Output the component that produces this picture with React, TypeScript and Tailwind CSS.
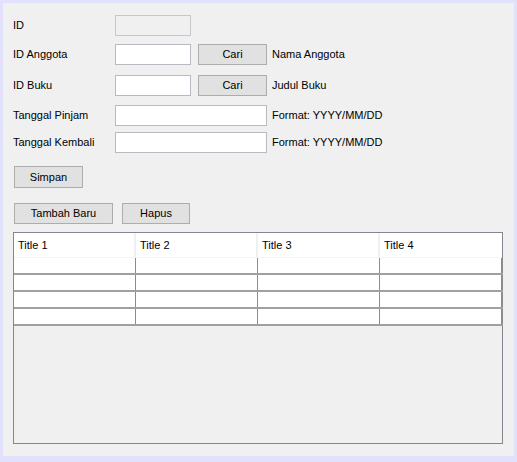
import React from 'react';

const font = { fontFamily: '"Liberation Sans", Arial, sans-serif' };

const Field: React.FC<{ w: string; disabled?: boolean }> = ({ w, disabled }) => (
  <div
    className={`${w} h-[21px] border ${disabled ? 'bg-[#f0f0f0] border-[#c6c6cc]' : 'bg-white border-[#b9b9c1]'}`}
  />
);

const Btn: React.FC<{ w: string; label: string; className?: string }> = ({ w, label, className }) => (
  <div
    className={`${w} h-[21px] bg-[#e1e1e1] border border-[#adadad] flex items-center justify-center text-[11px] text-black ${className || ''}`}
  >
    {label}
  </div>
);

const Label: React.FC<{ text: string }> = ({ text }) => (
  <div className="w-[102px] text-[11px] text-black leading-none">{text}</div>
);

const App: React.FC = () => {
  const titles = ['Title 1', 'Title 2', 'Title 3', 'Title 4'];
  const rows = [0, 1, 2, 3];

  return (
    <div className="w-[517px] h-[462px] bg-[#e1e1fb] pt-[3px] pl-[3px] pr-[3px] pb-[6px]" style={font}>
      <div className="w-full h-full bg-[#f0f0f0] pl-[10px] flex flex-col">
        {/* ID */}
        <div className="flex items-center mt-[12px]">
          <Label text="ID" />
          <Field w="w-[76px]" disabled />
        </div>

        {/* ID Anggota */}
        <div className="flex items-center mt-[8px]">
          <Label text="ID Anggota" />
          <Field w="w-[76px]" />
          <Btn w="w-[69px]" label="Cari" className="ml-[7px]" />
          <div className="ml-[5px] text-[11px]">Nama Anggota</div>
        </div>

        {/* ID Buku */}
        <div className="flex items-center mt-[10px]">
          <Label text="ID Buku" />
          <Field w="w-[76px]" />
          <Btn w="w-[69px]" label="Cari" className="ml-[7px]" />
          <div className="ml-[5px] text-[11px]">Judul Buku</div>
        </div>

        {/* Tanggal Pinjam */}
        <div className="flex items-center mt-[9px]">
          <Label text="Tanggal Pinjam" />
          <Field w="w-[152px]" />
          <div className="ml-[5px] text-[11px]">Format: YYYY/MM/DD</div>
        </div>

        {/* Tanggal Kembali */}
        <div className="flex items-center mt-[6px]">
          <Label text="Tanggal Kembali" />
          <Field w="w-[152px]" />
          <div className="ml-[5px] text-[11px]">Format: YYYY/MM/DD</div>
        </div>

        <div className="flex mt-[13px] ml-[1px]">
          <Btn w="w-[69px]" label="Simpan" className="h-[22px]" />
        </div>

        <div className="flex mt-[15px] ml-[1px] gap-[9px]">
          <Btn w="w-[99px]" label="Tambah Baru" />
          <Btn w="w-[68px]" label="Hapus" />
        </div>

        {/* Table */}
        <div className="mt-[8px] w-[490px] h-[212px] border border-[#828790] bg-[#f0f0f0] flex flex-col">
          <div className="flex h-[25px] bg-white border-b border-[#f4f4f4]">
            {titles.map((t, i) => (
              <div
                key={t}
                className={`w-[122px] flex items-center pl-[4px] text-[11px] text-black ${i < 3 ? 'border-r-2 border-[#f0f0f0]' : ''}`}
              >
                {t}
              </div>
            ))}
          </div>
          {rows.map((r) => (
            <div key={r} className="flex h-[17px] border-b-2 border-[#a0a0a0] w-[489px]">
              {titles.map((t, i) => (
                <div
                  key={t}
                  className={`bg-white ${i < 3 ? 'w-[122px] border-r border-[#8c8c8c]' : 'flex-1 border-r-2 border-[#8c8c8c]'}`}
                />
              ))}
            </div>
          ))}
        </div>
      </div>
    </div>
  );
};

export default App;
